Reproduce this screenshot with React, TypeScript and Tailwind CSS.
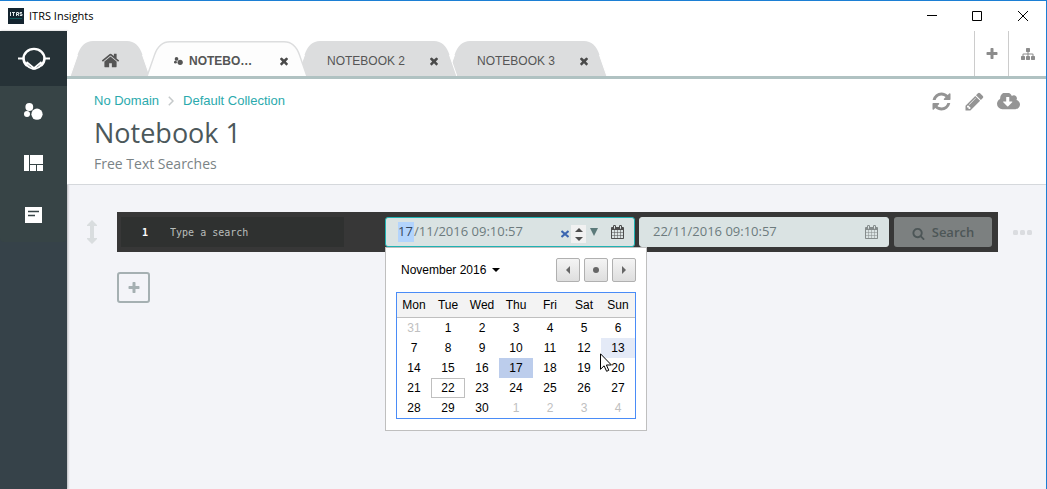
import React from "react";

const PATHS = {
  home: "M1472 992v480q0 26-19 45t-45 19h-384v-384h-256v384h-384q-26 0-45-19t-19-45v-480q0-1 .5-3t.5-3l575-474 575 474q1 2 1 6zm223-69l-62 74q-8 9-21 11h-3q-13 0-21-7l-692-577-692 577q-12 8-24 7-13-2-21-11l-62-74q-8-10-7-23.5t11-21.5l719-599q32-26 76-26t76 26l244 204v-195q0-14 9-23t23-9h192q14 0 23 9t9 23v408l219 182q10 8 11 21.5t-7 23.5z",
  times: "M1490 1322q0 40-28 68l-136 136q-28 28-68 28t-68-28l-294-294-294 294q-28 28-68 28t-68-28l-136-136q-28-28-28-68t28-68l294-294-294-294q-28-28-28-68t28-68l136-136q28-28 68-28t68 28l294 294 294-294q28-28 68-28t68 28l136 136q28 28 28 68t-28 68l-294 294 294 294q28 28 28 68z",
  plus: "M1600 736v192q0 40-28 68t-68 28h-416v416q0 40-28 68t-68 28h-192q-40 0-68-28t-28-68v-416h-416q-40 0-68-28t-28-68v-192q0-40 28-68t68-28h416v-416q0-40 28-68t68-28h192q40 0 68 28t28 68v416h416q40 0 68 28t28 68z",
  refresh: "M1639 1056q0 5-1 7-64 268-268 434.5t-478 166.5q-146 0-282.5-55t-243.5-157l-129 129q-19 19-45 19t-45-19-19-45v-448q0-26 19-45t45-19h448q26 0 45 19t19 45-19 45l-137 137q71 66 161 102t187 36q134 0 250-65t186-179q11-17 53-117 8-23 30-23h192q13 0 22.5 9.5t9.5 22.5zm25-800v448q0 26-19 45t-45 19h-448q-26 0-45-19t-19-45 19-45l138-138q-148-137-349-137-134 0-250 65t-186 179q-11 17-53 117-8 23-30 23h-199q-13 0-22.5-9.5t-9.5-22.5v-7q65-268 270-434.5t480-166.5q146 0 284 55.5t245 156.5l130-129q19-19 45-19t45 19 19 45z",
  pencil: "M491 1536l91-91-235-235-91 91v107h128v128h107zm523-928q0-22-22-22-10 0-17 7l-542 542q-7 7-7 17 0 22 22 22 10 0 17-7l542-542q7-7 7-17zm-54-192l416 416-832 832h-416v-416zm683 96q0 53-37 90l-166 166-416-416 166-165q36-38 90-38 53 0 91 38l235 234q37 39 37 91z",
  cloud: "M1216 928q0-14-9-23t-23-9h-224v-352q0-13-9.5-22.5t-22.5-9.5h-192q-13 0-22.5 9.5t-9.5 22.5v352h-224q-13 0-22.5 9.5t-9.5 22.5q0 14 9 23l352 352q9 9 23 9t23-9l351-351q10-12 10-24zm640 224q0 159-112.5 271.5t-271.5 112.5h-1088q-185 0-316.5-131.5t-131.5-316.5q0-130 70-240t188-165q-2-30-2-43 0-212 150-362t362-150q156 0 285.5 87t188.5 231q71-62 166-62 106 0 181 75t75 181q0 76-41 138 130 31 213.5 135.5t83.5 238.5z",
  sitemap: "M1792 1248v320q0 40-28 68t-68 28h-320q-40 0-68-28t-28-68v-320q0-40 28-68t68-28h96v-192h-512v192h96q40 0 68 28t28 68v320q0 40-28 68t-68 28h-320q-40 0-68-28t-28-68v-320q0-40 28-68t68-28h96v-192h-512v192h96q40 0 68 28t28 68v320q0 40-28 68t-68 28h-320q-40 0-68-28t-28-68v-320q0-40 28-68t68-28h96v-192q0-52 38-90t90-38h512v-192h-96q-40 0-68-28t-28-68v-320q0-40 28-68t68-28h320q40 0 68 28t28 68v320q0 40-28 68t-68 28h-96v192h512q52 0 90 38t38 90v192h96q40 0 68 28t28 68z",
  search: "M1216 832q0-185-131.5-316.5t-316.5-131.5-316.5 131.5-131.5 316.5 131.5 316.5 316.5 131.5 316.5-131.5 131.5-316.5zm512 832q0 52-38 90t-90 38q-54 0-90-38l-343-342q-179 124-399 124-143 0-273.5-55.5t-225-150-150-225-55.5-273.5 55.5-273.5 150-225 225-150 273.5-55.5 273.5 55.5 225 150 150 225 55.5 273.5q0 220-124 399l343 343q37 37 37 90z",
  calendar: "M192 1664h288v-288h-288v288zm352 0h320v-288h-320v288zm-352-352h288v-320h-288v320zm352 0h320v-320h-320v320zm-352-384h288v-288h-288v288zm736 736h320v-288h-320v288zm-384-736h320v-288h-320v288zm768 736h288v-288h-288v288zm-384-352h320v-320h-320v320zm-352-864v-288q0-13-9.5-22.5t-22.5-9.5h-64q-13 0-22.5 9.5t-9.5 22.5v288q0 13 9.5 22.5t22.5 9.5h64q13 0 22.5-9.5t9.5-22.5zm736 864h288v-320h-288v320zm-384-384h320v-288h-320v288zm384 0h288v-288h-288v288zm32-480v-288q0-13-9.5-22.5t-22.5-9.5h-64q-13 0-22.5 9.5t-9.5 22.5v288q0 13 9.5 22.5t22.5 9.5h64q13 0 22.5-9.5t9.5-22.5zm384-64v1280q0 52-38 90t-90 38h-1408q-52 0-90-38t-38-90v-1280q0-52 38-90t90-38h128v-96q0-66 47-113t113-47h64q66 0 113 47t47 113v96h384v-96q0-66 47-113t113-47h64q66 0 113 47t47 113v96h128q52 0 90 38t38 90z",
};

function Icon({ name, className, box = "0 0 1792 1792" }: { name: keyof typeof PATHS; className: string; box?: string }) {
  return (
    <svg viewBox={box} className={className} fill="currentColor" aria-hidden="true">
      <path d={PATHS[name]} />
    </svg>
  );
}

function Bubbles({ className }: { className: string }) {
  return (
    <svg viewBox="0 0 19 17" className={className} fill="currentColor" aria-hidden="true">
      <circle cx="5.3" cy="4" r="3.9" />
      <circle cx="3" cy="11" r="3" />
      <circle cx="13" cy="11.2" r="5.6" />
    </svg>
  );
}

function TitleBar() {
  return (
    <header className="flex h-[31px] items-center justify-between border-t border-[#1c7fd4] bg-white">
      <div className="flex items-center gap-[5px] pl-2 font-['Open_Sans','Noto_Sans',sans-serif] text-[11px] text-black">
        <svg viewBox="0 0 16 16" className="size-4" aria-hidden="true">
          <rect width="16" height="16" fill="#14242f" />
          <path d="M2 10h12v1H2z" fill="#12585c" />
          <path d="M2.500 4v4M4 4.500h3M5.500 4v4M8.500 8V4.500h2v2h-2M10 6.500l1 1.500M14 4.500h-2v1.500h2v1.500h-2" stroke="#dfe7e9" strokeWidth="1" fill="none" />
        </svg>
        <span>ITRS Insights</span>
      </div>
      <div className="flex">
        <button aria-label="Minimise" className="flex h-[30px] w-11 items-center justify-center">
          <svg viewBox="0 0 10 10" className="size-[10px]"><path d="M0 4.500h10" stroke="#000" /></svg>
        </button>
        <button aria-label="Maximise" className="flex h-[30px] w-[46px] items-center justify-center">
          <svg viewBox="0 0 10 10" className="size-[10px]"><path d="M.5.5h9v9h-9z" stroke="#000" fill="none" /></svg>
        </button>
        <button aria-label="Close" className="flex h-[30px] w-[46px] items-center justify-center">
          <svg viewBox="0 0 10 10" className="size-[10px]"><path d="M0 0l10 10M10 0L0 10" stroke="#000" /></svg>
        </button>
      </div>
    </header>
  );
}

function Sidebar() {
  const item = "flex h-[52px] items-center justify-center pb-[2px] text-white";
  return (
    <nav aria-label="Main" className="w-[67px] shrink-0 bg-[#364249] shadow-[1px_0_2px_rgba(0,0,0,0.25)]">
      <a href="#insights" aria-label="Insights" className="flex h-[55px] items-center justify-center bg-[#263237] text-white">
        <svg viewBox="0 0 34 24" className="h-6 w-[34px]" fill="none" stroke="currentColor">
          <path d="M10 18.800A10.500 9.700 0 1 1 24 18.800" strokeWidth="2.400" />
          <path d="M1 11.500h5.500Q8 19.500 16 22L24.500 15M33 11.500h-5.500Q26 19.500 18 22L9.500 15" strokeWidth="1.800" />
        </svg>
      </a>
      <div className="rounded-b bg-[#374446]">
        <a href="#notebooks" aria-label="Notebooks" className={item}><Bubbles className="h-[17px] w-[19px]" /></a>
        <a href="#dashboards" aria-label="Dashboards" className={item}>
          <svg viewBox="0 0 19 16" className="h-4 w-[19px]" fill="currentColor"><path d="M0 0h5v16H0zM6 0h13v9H6zM6 10h6v6H6zM13 10h6v6h-6z" /></svg>
        </a>
        <a href="#reports" aria-label="Reports" className={item}>
          <svg viewBox="0 0 17 16" className="h-4 w-[17px]"><path d="M0 0h17v16H0z" fill="#fff" /><path d="M3 4.500h11M3 8.500h7" stroke="#374446" strokeWidth="1.300" /></svg>
        </a>
      </div>
    </nav>
  );
}

function TabShape({ width, active = false }: { width: number; active?: boolean }) {
  const y = active ? 0.7 : 0;
  const d = `M0 35.500L7.500 14Q12 ${y} 23 ${y}H${width - 23}Q${width - 12} ${y} ${width - 7.5} 14L${width} 35.500`;
  const side = `M0 35.500L7.500 14M${width - 7.5} 14L${width} 35.500`;
  return (
    <svg viewBox={`0 0 ${width} 35`} preserveAspectRatio="none" className="absolute inset-0 -z-10 size-full" aria-hidden="true">
      <path d={d} fill={active ? "#fdfdfd" : "#dcddde"} />
      <path d={active ? d : side} fill="none" stroke={active ? "#dcddde" : "#fff"} strokeWidth={active ? 1.4 : 1} />
    </svg>
  );
}

function NotebookTab({ label, active = false }: { label: string; active?: boolean }) {
  return (
    <div className={`relative isolate flex h-[35px] w-[160px] items-center justify-between pt-1 pr-[17px] ${active ? "z-30 -ml-[3px] pl-[27px]" : "-ml-[10px] pl-[30px]"} ${label === "NOTEBOOK 2" ? "z-20" : ""}`}>
      <TabShape width={160} active={active} />
      <button className={`flex items-center gap-[6px] text-xs text-[#555] ${active ? "font-bold" : ""}`}>
        {active && <Bubbles className="h-2 w-[9px]" />}
        {label}
      </button>
      <button aria-label={`Close ${label}`} className="text-[#4a4a4a]"><Icon name="times" className="size-3" /></button>
    </div>
  );
}

function TabBar() {
  return (
    <div className="flex h-12 items-stretch justify-between border-b-[3px] border-[#b0c2c2] bg-white">
      <div className="flex items-end pl-[3px]">
        <button aria-label="Home" className="relative isolate flex h-[35px] w-[80px] items-center justify-center pt-1 text-[#555]">
          <TabShape width={80} />
          <Icon name="home" className="size-[19px]" />
        </button>
        <NotebookTab label="NOTEBO…" active />
        <NotebookTab label="NOTEBOOK 2" />
        <NotebookTab label="NOTEBOOK 3" />
      </div>
      <div className="flex text-[#8c8c8c]">
        <button aria-label="New tab" className="flex w-[34px] items-center justify-center border-l border-[#ccc]"><Icon name="plus" className="size-[14px]" /></button>
        <button aria-label="Site map" className="flex w-[38px] items-center justify-center border-l border-[#ccc]"><Icon name="sitemap" className="size-[14px]" /></button>
      </div>
    </div>
  );
}

function PageHeader() {
  return (
    <div className="flex h-[106px] justify-between border-b border-[#d5d8dc] bg-white pl-[27px] pr-[26px]">
      <div>
        <nav aria-label="Breadcrumb" className="flex h-11 items-center gap-[9px] text-[13px] text-[#2baaad]">
          <a href="#domain">No Domain</a>
          <svg viewBox="0 0 6 10" className="h-[10px] w-[6px]" fill="none" stroke="#c5c9ca" strokeWidth="1.500"><path d="M.8.8L5 5 .8 9.200" /></svg>
          <a href="#collection">Default Collection</a>
        </nav>
        <h1 className="font-['Open_Sans','Noto_Sans',sans-serif] text-[27px] leading-5 text-[#4c585b]">Notebook 1</h1>
        <p className="mt-[11px] font-['Open_Sans','Noto_Sans',sans-serif] text-sm leading-5 text-[#7a8386]">Free Text Searches</p>
      </div>
      <div className="flex h-11 items-center gap-3 text-[#949494]">
        <button aria-label="Refresh"><Icon name="refresh" className="size-[21px]" /></button>
        <button aria-label="Edit"><Icon name="pencil" className="size-[21px]" /></button>
        <button aria-label="Download"><Icon name="cloud" box="-64 192 1920 1408" className="h-[17px] w-[23px]" /></button>
      </div>
    </div>
  );
}

const WEEKS = [
  [31, 1, 2, 3, 4, 5, 6],
  [7, 8, 9, 10, 11, 12, 13],
  [14, 15, 16, 17, 18, 19, 20],
  [21, 22, 23, 24, 25, 26, 27],
  [28, 29, 30, 1, 2, 3, 4],
];

function dayStyle(week: number, day: number) {
  if ((week === 0 && day > 20) || (week === 4 && day < 10)) return "text-[#c0c0c0]";
  if (day === 13) return "bg-[#e4eaf7]";
  if (day === 17) return "bg-[#bccdec]";
  if (day === 22) return "border border-[#bfbfbf]";
  return "";
}

function Calendar() {
  const step = "flex size-6 items-center justify-center rounded-[2px] border border-[#b0b0b0] bg-linear-to-b from-[#f4f4f4] to-[#dedede]";
  return (
    <div className="absolute top-[30px] left-0 z-20 w-[262px] border border-[#bfbfbf] bg-white px-[10px] pt-[10px] pb-[11px] text-xs text-black">
      <div className="flex h-6 items-center justify-between pl-[5px]">
        <button className="flex items-center gap-[6px]">
          November 2016
          <svg viewBox="0 0 8 4" className="h-1 w-2"><path d="M0 0h8L4 4z" /></svg>
        </button>
        <div className="flex gap-1">
          <button aria-label="Previous month" className={step}><svg viewBox="0 0 4 8" className="h-2 w-1"><path d="M4 0v8L0 4z" fill="#666" /></svg></button>
          <button aria-label="Current month" className={step}><svg viewBox="0 0 6 6" className="size-[6px]"><circle cx="3" cy="3" r="3" fill="#666" /></svg></button>
          <button aria-label="Next month" className={step}><svg viewBox="0 0 4 8" className="h-2 w-1"><path d="M0 0v8l4-4z" fill="#666" /></svg></button>
        </div>
      </div>
      <div className="mt-[10px] border border-[#4a8cf7]">
        <table className="w-full table-fixed border-collapse text-center">
          <thead>
            <tr className="h-6 border-b border-[#bfbfbf] bg-[#f3f3f3]">
              {["Mon", "Tue", "Wed", "Thu", "Fri", "Sat", "Sun"].map((d) => <th key={d} className="p-0 font-normal">{d}</th>)}
            </tr>
          </thead>
          <tbody>
            {WEEKS.map((week, w) => (
              <tr key={w}>
                {week.map((day) => (
                  <td key={day} className="p-0"><button className={`block h-5 w-full ${dayStyle(w, day)}`}>{day}</button></td>
                ))}
              </tr>
            ))}
          </tbody>
        </table>
      </div>
      <svg viewBox="0 0 12 19" className="pointer-events-none absolute top-[105px] left-[214px] h-[19px] w-3" aria-hidden="true">
        <path d="M.5.8v15.500l3.600-3.500 2.500 5.500 2.200-1-2.400-5.300h5z" fill="#fff" stroke="#000" strokeWidth="1" />
      </svg>
    </div>
  );
}

function SearchRow() {
  const field = "flex h-[30px] w-[250px] items-center rounded-[3px] border bg-[#dae3e3] pr-[10px] font-['Open_Sans','Noto_Sans',sans-serif] text-[13px] text-[#6d7b7e]";
  return (
    <div className="flex items-center pr-[14px]">
      <button aria-label="Move row" className="flex w-[50px] justify-center text-[#d9dddf]">
        <svg viewBox="0 0 10 24" className="h-6 w-[10px]" fill="currentColor"><path d="M5 0l5 5v1H7v12h3v1l-5 5-5-5v-1h3V6H0V5z" /></svg>
      </button>
      <form className="flex h-10 flex-1 items-center bg-[#373737] pl-1 pr-[6px]">
        <div className="mr-[41px] flex h-[30px] min-w-0 flex-1 items-center gap-[22px] bg-[#2f3130] pl-[21px] font-['DejaVu_Sans_Mono',monospace] text-[10px]">
          <span className="font-bold text-white">1</span>
          <input aria-label="Search text" placeholder="Type a search" className="min-w-0 flex-1 bg-transparent outline-none placeholder:text-[#b9bdbb]" />
        </div>
        <div className="relative mr-1">
          <div className={`${field} border-[#1fb3b3] pl-3`}>
            <input aria-label="From day" defaultValue="17" className="w-4 bg-[#b3d4fc] text-[#33475e] outline-none" />
            <input aria-label="From date and time" defaultValue="/11/2016 09:10:57" className="min-w-0 flex-1 bg-transparent outline-none" />
            <div className="flex items-center">
              <button type="button" aria-label="Clear" className="mr-[2px]"><svg viewBox="0 0 8 8" className="mt-[3px] size-2"><path d="M.5 1l7 6M7.500 1l-7 6" stroke="#3c66b0" strokeWidth="2" /></svg></button>
              <button type="button" aria-label="Step value" className="mt-1 mr-1 flex h-[18px] w-[15px] items-center justify-center bg-[#f1f1f1]"><svg viewBox="0 0 8 13" className="h-[13px] w-2" fill="#4d4d4d"><path d="M0 4l4-4 4 4zM0 9h8l-4 4z" /></svg></button>
              <button type="button" aria-label="Open calendar" className="mr-[13px]"><svg viewBox="0 0 8 8" className="size-2" fill="#5b7a7a"><path d="M0 0h8L4 8z" /></svg></button>
              <Icon name="calendar" box="64 0 1664 1792" className="h-[14px] w-[13px] text-[#4d4d4d]" />
            </div>
          </div>
          <Calendar />
        </div>
        <div className={`${field} mr-[5px] border-[#dae3e3] pl-[13px]`}>
          <input aria-label="To date and time" defaultValue="22/11/2016 09:10:57" className="min-w-0 flex-1 bg-transparent outline-none" />
          <Icon name="calendar" box="64 0 1664 1792" className="h-[14px] w-[13px] text-[#858c8c]" />
        </div>
        <button type="button" className="flex h-[30px] w-[98px] items-center justify-center gap-[7px] rounded-[3px] bg-[#7c8080] pt-[2px] font-['Open_Sans','Noto_Sans',sans-serif] text-[13px] font-semibold text-[#4d5657]">
          <Icon name="search" className="size-[13px]" />Search
        </button>
      </form>
      <button aria-label="More" className="ml-[15px] text-[#dadce0]">
        <svg viewBox="0 0 19 5" className="h-[5px] w-[19px]" fill="currentColor"><rect width="5" height="5" rx="1.500" /><rect x="7" width="5" height="5" rx="1.500" /><rect x="14" width="5" height="5" rx="1.500" /></svg>
      </button>
    </div>
  );
}

export default function App() {
  return (
    <div className="flex min-h-screen flex-col border-r border-[#1c7fd4] bg-[#f3f4f8] font-['Liberation_Sans',Arial,sans-serif]">
      <TitleBar />
      <div className="flex flex-1">
        <Sidebar />
        <div className="flex min-w-0 flex-1 flex-col">
          <TabBar />
          <PageHeader />
          <main className="pt-[27px]">
            <SearchRow />
            <button aria-label="Add row" className="mt-5 ml-[50px] flex h-[31px] w-[33px] items-center justify-center rounded-[3px] border-2 border-[#a5b0b2] text-[#a5b0b2]">
              <Icon name="plus" className="size-[14px]" />
            </button>
          </main>
        </div>
      </div>
    </div>
  );
}
